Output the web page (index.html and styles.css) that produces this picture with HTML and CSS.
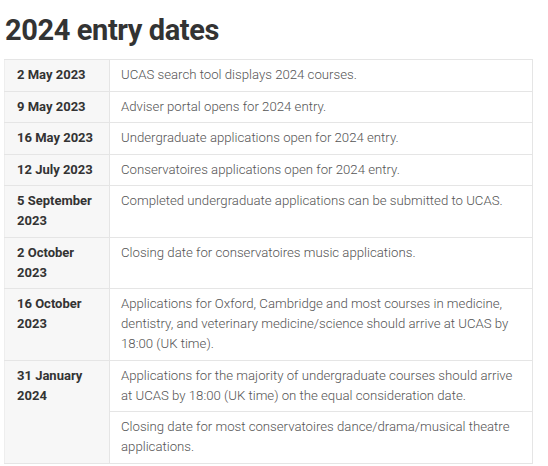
FILE: index.html
```html
<!DOCTYPE html>
<html lang="en">
<head>
<meta charset="utf-8">
<title>2024 entry dates</title>
<link rel="stylesheet" href="styles.css">
</head>
<body>
<main class="page">
  <h2 class="title">2024 entry dates</h2>
  <table class="dates">
    <tbody>
      <tr><th>2 May 2023</th><td>UCAS search tool displays 2024 courses.</td></tr>
      <tr><th>9 May 2023</th><td>Adviser portal opens for 2024 entry.</td></tr>
      <tr><th>16 May 2023</th><td>Undergraduate applications open for 2024 entry.</td></tr>
      <tr><th>12 July 2023</th><td>Conservatoires applications open for 2024 entry.</td></tr>
      <tr><th>5 September 2023</th><td>Completed undergraduate applications can be submitted to UCAS.</td></tr>
      <tr class="faint"><th>2 October 2023</th><td>Closing date for conservatoires music applications.</td></tr>
      <tr class="faint"><th>16 October 2023</th><td>Applications for Oxford, Cambridge and most courses in medicine, dentistry, and veterinary medicine/science should arrive at UCAS by 18:00 (UK time).</td></tr>
      <tr><th rowspan="2">31 January 2024</th><td>Applications for the majority of undergraduate courses should arrive at UCAS by 18:00 (UK time) on the equal consideration date.</td></tr>
      <tr><td>Closing date for most conservatoires dance/drama/musical theatre applications.</td></tr>
    </tbody>
  </table>
</main>
</body>
</html>
```

FILE: styles.css
```css
html, body {
  margin: 0;
  padding: 0;
  background: #ffffff;
}
body {
  font-family: Roboto, "Liberation Sans", Arial, sans-serif;
  color: #333333;
}
.page {
  padding: 0 15px 0 4px;
}
.title {
  margin: 12px 0 11px 1px;
  font-size: 29px;
  line-height: 36px;
  letter-spacing: -0.4px;
  font-weight: 700;
  color: #333333;
}
.dates {
  width: 529px;
  border-collapse: collapse;
  font-size: 13px;
  line-height: 20px;
}
.dates th,
.dates td {
  border: 1px solid #e5e5e5;
  padding: 5.2px 12px 5.33px 12px;
  vertical-align: top;
  text-align: left;
}
.dates th {
  width: 80px;
  background: #f7f7f7;
  font-weight: 700;
  color: #333333;
  border-left-color: #eeeeee;
}
.dates td {
  font-size: 13.2px;
  font-weight: 300;
  color: #555555;
  padding-left: 11px;
}
.dates tr.faint th,
.dates tr.faint td {
  border-top-color: #f1f1f1;
}
```
